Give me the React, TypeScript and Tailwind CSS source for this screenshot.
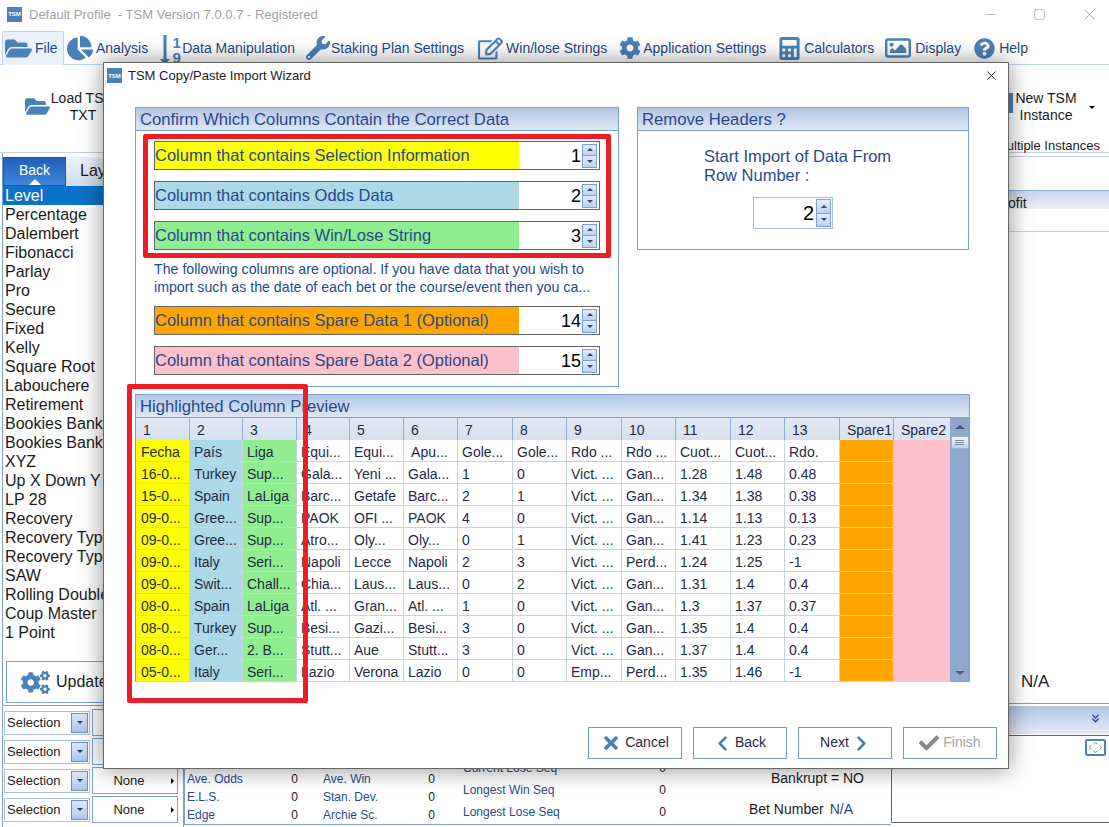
import { ChevronsDown, Minus, Square, X } from "lucide-react";
import {
  FaCalculator,
  FaChartPie,
  FaCheck,
  FaChevronLeft,
  FaChevronRight,
  FaCog,
  FaCogs,
  FaFolderOpen,
  FaQuestionCircle,
  FaRegEdit,
  FaRegImage,
  FaTimes,
  FaWrench,
} from "react-icons/fa";
import type { ReactNode } from "react";

const plans = [
  "Level", "Percentage", "Dalembert", "Fibonacci", "Parlay", "Pro", "Secure", "Fixed",
  "Kelly", "Square Root", "Labouchere", "Retirement", "Bookies Bank 1", "Bookies Bank 2",
  "XYZ", "Up X Down Y", "LP 28", "Recovery", "Recovery Type 1", "Recovery Type 2", "SAW",
  "Rolling Double", "Coup Master", "1 Point",
];

const headers = ["1", "2", "3", "4", "5", "6", "7", "8", "9", "10", "11", "12", "13"];

const rows = [
  ["Fecha", "País", "Liga", "Equi...", "Equi...", " Apu...", "Gole...", "Gole...", "Rdo ...", "Rdo ...", "Cuot...", "Cuot...", "Rdo."],
  ["16-0...", "Turkey", "Sup...", "Gala...", "Yeni ...", "Gala...", "1", "0", "Vict. ...", "Gan...", "1.28", "1.48", "0.48"],
  ["15-0...", "Spain", "LaLiga", "Barc...", "Getafe", "Barc...", "2", "1", "Vict. ...", "Gan...", "1.34", "1.38", "0.38"],
  ["09-0...", "Gree...", "Sup...", "PAOK", "OFI ...", "PAOK", "4", "0", "Vict. ...", "Gan...", "1.14", "1.13", "0.13"],
  ["09-0...", "Gree...", "Sup...", "Atro...", "Oly...", "Oly...", "0", "1", "Vict. ...", "Gan...", "1.41", "1.23", "0.23"],
  ["09-0...", "Italy", "Seri...", "Napoli", "Lecce", "Napoli", "2", "3", "Vict. ...", "Perd...", "1.24", "1.25", "-1"],
  ["09-0...", "Swit...", "Chall...", "Chia...", "Laus...", "Laus...", "0", "2", "Vict. ...", "Gan...", "1.31", "1.4", "0.4"],
  ["08-0...", "Spain", "LaLiga", "Atl. ...", "Gran...", "Atl. ...", "1", "0", "Vict. ...", "Gan...", "1.3", "1.37", "0.37"],
  ["08-0...", "Turkey", "Sup...", "Besi...", "Gazi...", "Besi...", "3", "0", "Vict. ...", "Gan...", "1.35", "1.4", "0.4"],
  ["08-0...", "Ger...", "2. B...", "Stutt...", "Aue", "Stutt...", "3", "0", "Vict. ...", "Gan...", "1.37", "1.4", "0.4"],
  ["05-0...", "Italy", "Seri...", "Lazio", "Verona", "Lazio", "0", "0", "Emp...", "Perd...", "1.35", "1.46", "-1"],
];

const gridCols = "grid grid-cols-[54px_53px_54px_53px_54px_54px_55px_54px_55px_54px_55px_54px_55px_54px_56px]";

function TsmLogo() {
  return (
    <div className="w-[15px] h-[15px] bg-[#4a82b8] text-white text-[6px] font-bold flex items-center justify-center leading-none shrink-0">
      TSM
    </div>
  );
}

function MenuItem({ icon, label, className }: { icon: ReactNode; label: string; className: string }) {
  return (
    <div className={`flex items-center shrink-0 ${className}`}>
      {icon}
      <span>{label}</span>
    </div>
  );
}

function Panel({ title, className, children }: { title: string; className: string; children: ReactNode }) {
  return (
    <div className={`border border-[#7ba1d4] bg-white flex flex-col ${className}`}>
      <div className="h-[23px] shrink-0 bg-gradient-to-b from-[#b4c6e3] to-[#dde7f4] border-b border-[#7ba1d4] text-[16.7px] leading-[23px] pl-[4px] text-[#27498c] whitespace-nowrap">
        {title}
      </div>
      {children}
    </div>
  );
}

function SpinButtons({ className }: { className: string }) {
  return (
    <div className={`flex flex-col border border-[#7ba1d4] w-[15px] ${className}`}>
      <div className="flex-1 bg-gradient-to-b from-[#e3edfb] to-[#bcd2f1] flex items-center justify-center border-b border-[#7ba1d4]">
        <div className="w-0 h-0 border-x-[3px] border-x-transparent border-b-[3px] border-b-[#2b4a7a]" />
      </div>
      <div className="flex-1 bg-gradient-to-b from-[#e3edfb] to-[#bcd2f1] flex items-center justify-center">
        <div className="w-0 h-0 border-x-[3px] border-x-transparent border-t-[3px] border-t-[#2b4a7a]" />
      </div>
    </div>
  );
}

function ColumnRow({ label, value, color, className }: { label: string; value: string; color: string; className?: string }) {
  return (
    <div className={`flex h-[29px] w-[446px] border border-[#666] ${className ?? ""}`}>
      <div className={`w-[364px] text-[16.5px] leading-[27px] text-[#27498c] ${color}`}>{label}</div>
      <div className="flex-1 flex items-center justify-end pr-[2px] bg-white">
        <span className="text-[18px] text-black pr-[1px] pt-[2px]">{value}</span>
        <SpinButtons className="h-[24px]" />
      </div>
    </div>
  );
}

function DialogButton({ children, muted }: { children: ReactNode; muted?: boolean }) {
  return (
    <div
      className={`w-[94px] h-[32px] border border-[#6f9bd1] bg-white flex items-center justify-center gap-[4px] text-[14px] leading-[18px] ${
        muted ? "text-[#a3a3a3]" : "text-[#1f2a44]"
      }`}
    >
      {children}
    </div>
  );
}

function SelectionRow({ showNone }: { showNone: boolean }) {
  return (
    <div className="flex items-center h-[29px] pl-[2px] gap-[2px]">
      <div className="w-[86px] h-[24px] border border-[#a9c0e0] flex items-center justify-between pl-[2px] pr-[1px] text-[13px] text-[#1b1b1b]">
        <span>Selection</span>
        <div className="w-[17px] h-[20px] border border-[#6f8fbd] bg-gradient-to-b from-[#dbe7f9] to-[#a9c6f0] flex items-center justify-center">
          <div className="w-0 h-0 border-x-[3px] border-x-transparent border-t-[3px] border-t-[#1f3f7a]" />
        </div>
      </div>
      <div className="w-[86px] h-[27px] border border-[#7ba1d4] flex items-center justify-center relative text-[13px] text-[#1b1b1b]">
        {showNone && <span className="pr-[12px]">None</span>}
        {showNone && (
          <div className="absolute right-[3px] w-0 h-0 border-y-[3px] border-y-transparent border-l-[3px] border-l-black" />
        )}
      </div>
    </div>
  );
}

function StatLine({ label, value }: { label: string; value: string }) {
  return (
    <div className="flex text-[12px] h-[15px]">
      <span className="text-[#27498c] flex-1 whitespace-nowrap">{label}</span>
      <span className="text-[#1b1b1b]">{value}</span>
    </div>
  );
}

export default function App() {
  return (
    <div className="relative w-[1109px] h-[827px] overflow-hidden bg-white [font-family:Liberation_Sans,Arial,sans-serif]">
      {/* title bar */}
      <div className="h-[28px] flex items-center pl-[7px] gap-[7px]">
        <TsmLogo />
        <span className="text-[13px] text-[#a2a2a2] whitespace-pre pt-[1px]">Default Profile  - TSM Version 7.0.0.7 - Registered</span>
        <div className="ml-auto flex items-center gap-[35px] pr-[11px] text-[#8a8a8a]">
          <Minus size={15} strokeWidth={1} />
          <Square size={13} strokeWidth={1} />
          <X size={17} strokeWidth={1} />
        </div>
      </div>

      {/* menu */}
      <div className="h-[37px] flex items-stretch pl-[2px] border-b border-[#c3d2e6] text-[14px] text-[#27497f]">
        <MenuItem
          className="w-[62px] h-[34px] mt-[3px] pl-[2px] gap-[3px] bg-[#e9f1f9] border border-b-0 border-[#c3d2e6] rounded-t-[2px]"
          icon={<FaFolderOpen size={27} className="text-[#4a82b8] shrink-0" />}
          label="File"
        />
        <MenuItem className="ml-[3px] gap-[3px] pt-[4px]" icon={<FaChartPie size={26} className="text-[#4a82b8]" />} label="Analysis" />
        <MenuItem
          className="ml-[11px] pt-[4px]"
          icon={
            <div className="flex items-start text-[#4a82b8] h-[30px] pt-[2px]">
              <svg width="12" height="30" viewBox="0 0 12 30">
                <path d="M4.5 0h3v24h3.5L6 30 1 24h3.5z" fill="currentColor" />
              </svg>
              <div className="flex flex-col text-[15px] font-bold leading-[15px] w-[11px] items-center">
                <span>1</span>
                <span>9</span>
              </div>
            </div>
          }
          label="Data Manipulation"
        />
        <MenuItem className="ml-[11px] gap-[1px] pt-[4px]" icon={<FaWrench size={24} className="text-[#4a82b8]" />} label="Staking Plan Settings" />
        <MenuItem className="ml-[14px] gap-[3px] pt-[4px]" icon={<FaRegEdit size={25} className="text-[#4a82b8]" />} label="Win/lose Strings" />
        <MenuItem className="ml-[12px] gap-[2px] pt-[4px]" icon={<FaCog size={22} className="text-[#4a82b8]" />} label="Application Settings" />
        <MenuItem className="ml-[12px] gap-[3px] pt-[4px]" icon={<FaCalculator size={23} className="text-[#4a82b8]" />} label="Calculators" />
        <MenuItem className="ml-[11px] gap-[4px] pt-[4px]" icon={<FaRegImage size={26} className="text-[#4a82b8]" />} label="Display" />
        <MenuItem className="ml-[13px] gap-[4px] pt-[4px]" icon={<FaQuestionCircle size={21} className="text-[#4a82b8]" />} label="Help" />
      </div>

      {/* ribbon */}
      <div className="h-[88px] border-b border-[#c3d2e6] relative flex text-[14px] text-[#1b1b1b]">
        <div className="flex items-center pl-[25px] pb-[4px]">
          <FaFolderOpen size={25} className="text-[#4a82b8]" />
          <div className="w-[66px] text-center leading-[17px]">
            <div>Load TSM</div>
            <div>TXT</div>
          </div>
        </div>
        <div className="ml-auto w-[101px] flex flex-col items-end pr-[9px]">
          <div className="flex items-center mt-[25px] w-full">
            <div className="w-[62px] text-center leading-[17px] ml-[7px]">
              <div>New TSM</div>
              <div>Instance</div>
            </div>
            <div className="ml-[12px] w-0 h-0 border-x-[3px] border-x-transparent border-t-[3px] border-t-black" />
          </div>
          <div className="text-[13px] mt-[12px] whitespace-nowrap">Multiple Instances</div>
        </div>
        <div className="absolute left-[1007px] top-[28px] w-[6px] h-[20px] bg-[#4a82b8]" />
      </div>

      {/* body */}
      <div className="flex h-[674px]">
        <aside className="w-[182px] shrink-0 ml-[2px] border-l border-[#7ba1d4] border-r flex flex-col overflow-hidden">
          <div className="flex h-[29px] mt-[4px] shrink-0">
            <div className="relative w-[63px] bg-gradient-to-b from-[#2160b8] to-[#3f86dc] border border-[#1f55a4] text-white text-[14px] text-center leading-[24px]">
              Back
              <div className="absolute left-[25px] bottom-0 w-0 h-0 border-x-[6px] border-x-transparent border-b-[6px] border-b-white" />
            </div>
            <div className="flex-1 bg-gradient-to-b from-[#eef3fa] to-[#cfdcef] pl-[14px] text-[16px] text-[#1b1b1b] leading-[28px]">Layout</div>
          </div>
          <div className="h-[456px] shrink-0 text-[16px] leading-[19px] text-[#1b1b1b]">
            {plans.map((p, i) => (
              <div key={i} className={`h-[19px] pl-[2px] whitespace-nowrap ${i === 0 ? "bg-[#0a72c8] text-white" : ""}`}>
                {p}
              </div>
            ))}
          </div>
          <div className="mt-[19px] ml-[3px] h-[42px] border border-[#7ba1d4] flex items-center pl-[14px] gap-[6px] shrink-0 text-[16px] text-[#1b1b1b]">
            <FaCogs size={29} className="text-[#4a82b8]" />
            <span>Update</span>
          </div>
          <div className="mt-[2px] border-t border-[#7ba1d4] pt-[2px] -ml-[1px] shrink-0">
            <SelectionRow showNone={false} />
            <SelectionRow showNone={false} />
            <SelectionRow showNone />
            <SelectionRow showNone />
          </div>
        </aside>

        <main className="flex-1 flex flex-col min-w-0">
          <div className="h-[550px] flex flex-col text-[#1b1b1b]">
            <div className="mt-[3px] border-t border-[#c3d2e6]" />
            <div className="mt-[33px] h-[19px] bg-gradient-to-b from-[#c9d7ea] to-[#eaf0f8] border-t border-[#8fb0da] pl-[810px] text-[14px] leading-[24px]">Profit</div>
            <div className="mt-[22px] border-t border-[#c3d2e6]" />
            <div className="mt-auto pl-[837px] pb-[9px] text-[17px]">N/A</div>
          </div>
          <div className="h-[32px] border-t border-[#7ba1d4] pt-[2px]">
            <div className="h-[28px] bg-gradient-to-b from-[#b4c6e3] to-[#e3ebf6] flex items-center justify-end pr-[7px] pb-[4px] text-[#27498c]">
              <ChevronsDown size={13} strokeWidth={2.5} />
            </div>
          </div>
          <div className="h-[90px] flex">
            <div className="w-[707px] flex border-l border-[#7ba1d4] border-b text-[14px] text-[#1b1b1b] shrink-0">
              <div className="w-[138px] pl-[2px] pr-[25px] pt-[35px] flex flex-col gap-[3px] shrink-0">
                <StatLine label="Ave. Odds" value="0" />
                <StatLine label="E.L.S." value="0" />
                <StatLine label="Edge" value="0" />
              </div>
              <div className="w-[140px] pr-[28px] pt-[35px] flex flex-col gap-[3px] shrink-0">
                <StatLine label="Ave. Win" value="0" />
                <StatLine label="Stan. Dev." value="0" />
                <StatLine label="Archie Sc." value="0" />
              </div>
              <div className="w-[205px] pr-[2px] pt-[24px] flex flex-col gap-[7px] shrink-0">
                <StatLine label="Current Lose Seq" value="0" />
                <StatLine label="Longest Win Seq" value="0" />
                <StatLine label="Longest Lose Seq" value="0" />
              </div>
              <div className="flex-1 flex flex-col items-end pr-[27px] pt-[33px]">
                <div>Bankrupt = NO</div>
                <div className="mt-[10px] mr-[11px] flex gap-[6px] whitespace-nowrap">
                  <span>Bet Number</span>
                  <span className="text-[#27498c]">N/A</span>
                </div>
              </div>
            </div>
            <div className="flex-1 h-[88px] border border-r-0 border-[#666] flex justify-end pr-[3px] pt-[3px]">
              <svg width="21" height="17" viewBox="0 0 21 17" fill="none" stroke="#4a82b8">
                <rect x="1" y="1" width="19" height="15" rx="1.5" strokeWidth="2" />
                <path d="M8.5 5l2-1.5 2 1.5M8.5 12l2 1.5 2-1.5M6 6.5L4.5 8.5 6 10.5M15 6.5l1.5 2-1.5 2" strokeWidth="1" />
              </svg>
            </div>
          </div>
        </main>
      </div>

      {/* wizard dialog */}
      <div className="absolute left-[103px] top-[62px] w-[906px] h-[707px] bg-white border border-[#666] shadow-[0_0_22px_rgba(0,0,0,0.45)] flex flex-col">
        <div className="h-[25px] shrink-0 flex items-center pl-[3px] gap-[6px] text-[13px] text-[#1b1b1b]">
          <TsmLogo />
          <span>TSM Copy/Paste Import Wizard</span>
          <X size={15} strokeWidth={1.3} className="ml-auto mr-[9px] text-black" />
        </div>

        <div className="flex-1 flex flex-col pl-[31px] pr-[38px] pt-[19px]">
          <div className="flex gap-[18px] items-start">
            <Panel title="Confirm Which Columns Contain the Correct Data" className="w-[484px] h-[280px]">
              <div className="pl-[18px] pt-[10px]">
                <ColumnRow label="Column that contains Selection Information" value="1" color="bg-[#ffff00]" />
                <ColumnRow label="Column that contains Odds Data" value="2" color="bg-[#add8e6]" className="mt-[11px]" />
                <ColumnRow label="Column that contains Win/Lose String" value="3" color="bg-[#90ee90]" className="mt-[11px]" />
                <div className="h-[56px] pt-[10px] text-[14.2px] leading-[18px] text-[#27498c] whitespace-nowrap">
                  <div>The following columns are optional. If you have data that you wish to</div>
                  <div>import such as the date of each bet or the course/event then you ca...</div>
                </div>
                <ColumnRow label="Column that contains Spare Data 1 (Optional)" value="14" color="bg-[#ffa500]" />
                <ColumnRow label="Column that contains Spare Data 2 (Optional)" value="15" color="bg-[#ffc0cb]" className="mt-[11px]" />
              </div>
            </Panel>

            <Panel title="Remove Headers ?" className="w-[332px] h-[143px]">
              <div className="pl-[66px] pt-[16px] text-[16.5px] leading-[19px] text-[#27498c]">
                <div>Start Import of Data From</div>
                <div>Row Number :</div>
              </div>
              <div className="mt-[12px] ml-[115px] w-[80px] h-[32px] border border-[#a9c0e0] flex items-center justify-end pr-[1px]">
                <span className="text-[20px] text-black pr-[2px]">2</span>
                <SpinButtons className="h-[28px]" />
              </div>
            </Panel>
          </div>

          <Panel title="Highlighted Column Preview" className="w-[835px] h-[288px] mt-[7px]">
            <div className="flex-1 flex min-h-0 relative">
              <div className="flex-1 min-w-0">
                <div className={`${gridCols} h-[22px] text-[14px] text-[#1f2a44]`}>
                  {headers.map((h) => (
                    <div key={h} className="bg-gradient-to-b from-[#e2e9f5] to-[#d5dfee] border-r border-[#8fb0da] pl-[7px] leading-[25px]">
                      {h}
                    </div>
                  ))}
                  <div className="bg-gradient-to-b from-[#e2e9f5] to-[#d5dfee] border-r border-[#8fb0da] pl-[7px] leading-[25px]">Spare1</div>
                  <div className="bg-gradient-to-b from-[#e2e9f5] to-[#d5dfee] pl-[7px] leading-[25px]">Spare2</div>
                </div>
                {rows.map((row, r) => (
                  <div key={r} className={`${gridCols} h-[22px] text-[14px] text-[#1f2a44]`}>
                    {row.map((cell, c) => (
                      <div
                        key={c}
                        className={`border-r border-b border-[#c5d2e8] leading-[24px] overflow-hidden whitespace-pre ${
                          c === 0 ? "bg-[#ffff00] pl-[5px]" : c === 1 ? "bg-[#add8e6] pl-[4px]" : c === 2 ? "bg-[#90ee90] pl-[4px]" : "bg-white pl-[4px]"
                        }`}
                      >
                        {cell}
                      </div>
                    ))}
                    <div className="bg-[#ffa500] border-r border-b border-[#c5d2e8]" />
                    <div className="bg-[#ffc0cb] border-b border-[#c5d2e8]" />
                  </div>
                ))}
              </div>
              <div className="w-[19px] shrink-0 bg-[#8fa9ce] flex flex-col items-center relative">
                <div className="mt-[7px] w-0 h-0 border-x-[5px] border-x-transparent border-b-[4px] border-b-[#4a5a76]" />
                <div className="mt-[7px] w-[18px] h-[13px] bg-gradient-to-b from-[#f4f7fc] to-[#c3d2e8] border border-[#9fb2d0] rounded-[2px] flex flex-col justify-center items-center gap-[1px]">
                  <div className="w-[9px] h-px bg-[#7a8aa5]" />
                  <div className="w-[9px] h-px bg-[#7a8aa5]" />
                  <div className="w-[9px] h-px bg-[#7a8aa5]" />
                </div>
                <div className="mt-auto mb-[6px] w-0 h-0 border-x-[5px] border-x-transparent border-t-[4px] border-t-[#4a5a76]" />
              </div>
            </div>
          </Panel>

          <div className="mt-[45px] flex gap-[11px] justify-end mr-[-27px]">
            <DialogButton>
              <FaTimes size={20} className="text-[#4a82b8]" />
              <span className="pb-[2px]">Cancel</span>
            </DialogButton>
            <DialogButton>
              <FaChevronLeft size={17} className="text-[#4a82b8]" />
              <span className="pb-[2px]">Back</span>
            </DialogButton>
            <DialogButton>
              <span className="pb-[2px]">Next</span>
              <FaChevronRight size={17} className="text-[#4a82b8]" />
            </DialogButton>
            <DialogButton muted>
              <FaCheck size={20} className="text-[#888]" />
              <span className="pb-[2px]">Finish</span>
            </DialogButton>
          </div>
        </div>
      </div>

      {/* red annotation boxes */}
      <div className="absolute left-[143px] top-[134px] w-[468px] h-[124px] border-[5px] border-[#ee1c25] rounded-[2px]" />
      <div className="absolute left-[127px] top-[384px] w-[181px] h-[319px] border-[5px] border-[#ee1c25] rounded-[2px]" />
    </div>
  );
}
